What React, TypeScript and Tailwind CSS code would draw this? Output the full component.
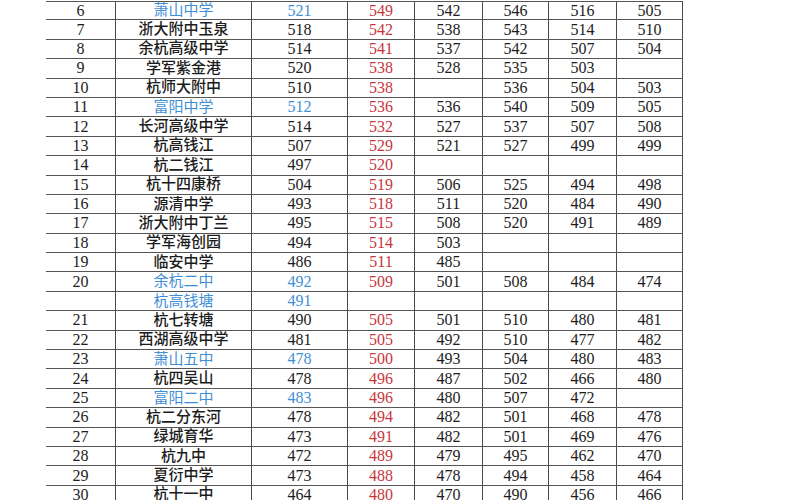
type Tone = 'black' | 'blue';

interface ScoreRow {
  rank: string;
  school: string;
  tone: Tone;
  scores: string[]; // [first, line, y1, y2, y3, y4]
}

const rows: ScoreRow[] = [
  { rank: '6', school: '萧山中学', tone: 'blue', scores: ['521', '549', '542', '546', '516', '505'] },
  { rank: '7', school: '浙大附中玉泉', tone: 'black', scores: ['518', '542', '538', '543', '514', '510'] },
  { rank: '8', school: '余杭高级中学', tone: 'black', scores: ['514', '541', '537', '542', '507', '504'] },
  { rank: '9', school: '学军紫金港', tone: 'black', scores: ['520', '538', '528', '535', '503', ''] },
  { rank: '10', school: '杭师大附中', tone: 'black', scores: ['510', '538', '', '536', '504', '503'] },
  { rank: '11', school: '富阳中学', tone: 'blue', scores: ['512', '536', '536', '540', '509', '505'] },
  { rank: '12', school: '长河高级中学', tone: 'black', scores: ['514', '532', '527', '537', '507', '508'] },
  { rank: '13', school: '杭高钱江', tone: 'black', scores: ['507', '529', '521', '527', '499', '499'] },
  { rank: '14', school: '杭二钱江', tone: 'black', scores: ['497', '520', '', '', '', ''] },
  { rank: '15', school: '杭十四康桥', tone: 'black', scores: ['504', '519', '506', '525', '494', '498'] },
  { rank: '16', school: '源清中学', tone: 'black', scores: ['493', '518', '511', '520', '484', '490'] },
  { rank: '17', school: '浙大附中丁兰', tone: 'black', scores: ['495', '515', '508', '520', '491', '489'] },
  { rank: '18', school: '学军海创园', tone: 'black', scores: ['494', '514', '503', '', '', ''] },
  { rank: '19', school: '临安中学', tone: 'black', scores: ['486', '511', '485', '', '', ''] },
  { rank: '20', school: '余杭二中', tone: 'blue', scores: ['492', '509', '501', '508', '484', '474'] },
  { rank: '', school: '杭高钱塘', tone: 'blue', scores: ['491', '', '', '', '', ''] },
  { rank: '21', school: '杭七转塘', tone: 'black', scores: ['490', '505', '501', '510', '480', '481'] },
  { rank: '22', school: '西湖高级中学', tone: 'black', scores: ['481', '505', '492', '510', '477', '482'] },
  { rank: '23', school: '萧山五中', tone: 'blue', scores: ['478', '500', '493', '504', '480', '483'] },
  { rank: '24', school: '杭四吴山', tone: 'black', scores: ['478', '496', '487', '502', '466', '480'] },
  { rank: '25', school: '富阳二中', tone: 'blue', scores: ['483', '496', '480', '507', '472', ''] },
  { rank: '26', school: '杭二分东河', tone: 'black', scores: ['478', '494', '482', '501', '468', '478'] },
  { rank: '27', school: '绿城育华', tone: 'black', scores: ['473', '491', '482', '501', '469', '476'] },
  { rank: '28', school: '杭九中', tone: 'black', scores: ['472', '489', '479', '495', '462', '470'] },
  { rank: '29', school: '夏衍中学', tone: 'black', scores: ['473', '488', '478', '494', '458', '464'] },
  { rank: '30', school: '杭十一中', tone: 'black', scores: ['464', '480', '470', '490', '456', '466'] },
];

const cell = 'flex items-center justify-center border-r border-[#4a4a4a] h-full';

function Row({ row, first }: { row: ScoreRow; first: boolean }) {
  const blue = row.tone === 'blue';
  const nameColor = blue ? 'text-[#3f8fd6]' : 'text-[#1c1c1c] font-medium';
  const scoreColor = blue ? 'text-[#3f8fd6]' : 'text-[#1c1c1c]';
  const [score, line, ...years] = row.scores;
  const widths = ['w-[68px]', 'w-[66px]', 'w-[68px]', 'w-[66px]'];

  return (
    <div className={`flex w-[637px] h-[19.4px] border-b border-[#555] ${first ? 'border-t' : ''}`}>
      <div className={`${cell} w-[70px] text-[#1c1c1c]`}>{row.rank}</div>
      <div className={`${cell} w-[136px] text-[15px] ${nameColor}`}>{row.school}</div>
      <div className={`${cell} w-[96px] ${scoreColor}`}>{score}</div>
      <div className={`${cell} w-[67px] text-[#c9353d]`}>{line}</div>
      {years.map((value, i) => (
        <div key={i} className={`${cell} ${widths[i]} text-[#1c1c1c]`}>
          {value}
        </div>
      ))}
    </div>
  );
}

export default function App() {
  return (
    <div className="w-[800px] h-[500px] overflow-hidden bg-white">
      <div
        className="ml-[46px] pt-[1px] text-[16px] leading-none"
        style={{ fontFamily: '"Liberation Serif", "Noto Sans CJK SC", serif' }}
      >
        {rows.map((row, index) => (
          <Row key={row.rank + row.school} row={row} first={index === 0} />
        ))}
      </div>
    </div>
  );
}
